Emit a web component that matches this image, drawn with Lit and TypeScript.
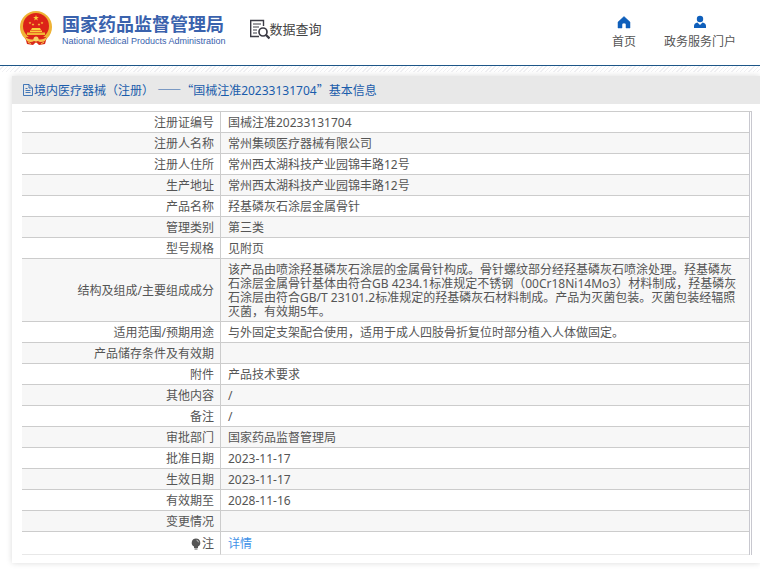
import { LitElement, html, css, svg } from "lit";
import { customElement } from "lit/decorators.js";
import { classMap } from "lit/directives/class-map.js";

const rows: [string, string][] = [
  ["注册证编号", "国械注准20233131704"],
  ["注册人名称", "常州集硕医疗器械有限公司"],
  ["注册人住所", "常州西太湖科技产业园锦丰路12号"],
  ["生产地址", "常州西太湖科技产业园锦丰路12号"],
  ["产品名称", "羟基磷灰石涂层金属骨针"],
  ["管理类别", "第三类"],
  ["型号规格", "见附页"],
  [
    "结构及组成/主要组成成分",
    "该产品由喷涂羟基磷灰石涂层的金属骨针构成。骨针螺纹部分经羟基磷灰石喷涂处理。羟基磷灰石涂层金属骨针基体由符合GB 4234.1标准规定不锈钢（00Cr18Ni14Mo3）材料制成，羟基磷灰石涂层由符合GB/T 23101.2标准规定的羟基磷灰石材料制成。产品为灭菌包装。灭菌包装经辐照灭菌，有效期5年。",
  ],
  ["适用范围/预期用途", "与外固定支架配合使用，适用于成人四肢骨折复位时部分植入人体做固定。"],
  ["产品储存条件及有效期", ""],
  ["附件", "产品技术要求"],
  ["其他内容", "/"],
  ["备注", "/"],
  ["审批部门", "国家药品监督管理局"],
  ["批准日期", "2023-11-17"],
  ["生效日期", "2023-11-17"],
  ["有效期至", "2028-11-16"],
  ["变更情况", ""],
];

const star = (x: number, y: number, r: number) => {
  const pts = Array.from({ length: 10 }, (_, i) => {
    const a = (Math.PI / 5) * i - Math.PI / 2;
    const d = i % 2 ? r * 0.4 : r;
    return `${x + d * Math.cos(a)},${y + d * Math.sin(a)}`;
  }).join(" ");
  return svg`<polygon points=${pts} fill="#fbd03c" />`;
};

@customElement("site-header")
export class SiteHeader extends LitElement {
  static styles = css`
    :host {
      display: block;
      background: #fff;
      border-bottom: 1px solid #1d5688;
    }
    .bar {
      display: flex;
      align-items: flex-start;
      height: 65px;
      box-sizing: border-box;
      padding: 10px 24px 0 19px;
    }
    a {
      color: inherit;
      text-decoration: none;
    }
    .brand {
      display: flex;
      gap: 8px;
      color: #3a62ad;
    }
    .names {
      display: flex;
      flex-direction: column;
      padding-top: 4px;
      white-space: nowrap;
    }
    .zh {
      font-size: 18px;
      line-height: 20px;
      font-weight: 700;
    }
    .en {
      font-family: "Liberation Sans", sans-serif;
      font-size: 9px;
      line-height: 14px;
    }
    .query {
      display: flex;
      align-items: center;
      margin: 8px 0 0 24px;
      font-size: 13px;
      line-height: 22px;
      color: #444;
      white-space: nowrap;
    }
    nav {
      display: flex;
      gap: 28px;
      margin-left: auto;
      padding-top: 5px;
    }
    .item {
      display: flex;
      flex-direction: column;
      align-items: center;
      gap: 4px;
      line-height: 18px;
      color: #555;
      white-space: nowrap;
    }
    svg {
      display: block;
      flex: none;
    }
  `;

  render() {
    return html`
      <div class="bar">
        <a class="brand" href="#">
          <svg width="35" height="36" viewBox="0 0 35 36" aria-hidden="true">
            <circle cx="17" cy="17" r="16" fill="#efb336" />
            <path d="M6 27 L8 34 L14 35 L17 32 L20 35 L26 34 L28 27 Z" fill="#d92a1c" />
            <circle cx="17" cy="16" r="13" fill="#dc2318" />
            ${star(17, 8, 3)} ${star(11, 13, 1.5)} ${star(14, 14.5, 1.5)}
            ${star(20, 14.5, 1.5)} ${star(23, 13, 1.5)}
            <path d="M12 20 L13 18 H21 L22 20 Z M11 20.5 H23 V22 H11 Z" fill="#fbd03c" />
            <path d="M8 22.5 H26 V25 H8 Z" fill="#f3b534" />
            <path d="M5 26 Q11 31 15 29 L17 27 L19 29 Q23 31 29 26 L26 31 Q21 33 19 31 H15 Q12 33 8 31 Z" fill="#f5c24a" />
            <circle cx="17" cy="29" r="2.5" fill="#f8d266" />
            <path d="M9 32 L12 34 M25 32 L22 34" stroke="#f5c24a" />
          </svg>
          <span class="names">
            <span class="zh">国家药品监督管理局</span>
            <span class="en">National Medical Products Administration</span>
          </span>
        </a>
        <a class="query" href="#">
          <svg width="20" height="22" viewBox="0 0 20 22" fill="none" stroke="#3c3c46" aria-hidden="true">
            <path d="M13.500 8 V2.500 H0.700 V18.500 H9" stroke-width="1.4" />
            <path d="M3 6 H11 M3 9 H9 M3 12 H7 M3 15 H7" stroke-width="1.2" />
            <circle cx="13" cy="14" r="4" stroke-width="1.7" />
            <path d="M16 17 L19.500 20.500" stroke-width="2.3" />
          </svg>
          <span>数据查询</span>
        </a>
        <nav>
          <a class="item" href="#">
            <svg width="14" height="14" viewBox="0 0 14 14" fill="#0f5fbb" aria-hidden="true">
              <path d="M7 1.500 L13 7 V13 H9 V9.500 Q9 8 7 8 Q5 8 5 9.500 V13 H1 V7 Z" stroke="#0f5fbb" stroke-width=".5" stroke-linejoin="round" />
            </svg>
            首页
          </a>
          <a class="item" href="#">
            <svg width="14" height="14" viewBox="0 0 14 14" fill="#0f5fbb" aria-hidden="true">
              <circle cx="7" cy="4" r="3.2" />
              <path d="M1 13 V11 Q1 8 4.500 7.500 L7 10 L9.500 7.500 Q13 8 13 11 V13 Z" />
            </svg>
            政务服务门户
          </a>
        </nav>
      </div>
    `;
  }
}

@customElement("record-card")
export class RecordCard extends LitElement {
  static styles = css`
    :host {
      display: block;
      background: #fff;
      box-shadow: 0 0 6px rgba(0, 0, 0, 0.15);
    }
    h1 {
      display: flex;
      align-items: center;
      margin: 0;
      padding: 0 10px;
      height: 28px;
      background: #e8e8e8;
      color: #1a5cab;
      font-size: 12px;
      font-weight: 400;
      white-space: pre;
    }
    .wide {
      font-family: "Noto Sans CJK SC", sans-serif;
      font-feature-settings: "fwid";
    }
    .body {
      padding: 7px 8px 8px 10px;
    }
    .frame {
      border-top: 1px solid #ccc;
      border-right: 1px solid #c8c8cf;
      padding-right: 1px;
    }
    table {
      width: 100%;
      table-layout: fixed;
      border-collapse: separate;
      border-spacing: 0;
      border-right: 1px solid #c8c8cf;
    }
    th,
    td {
      height: 14px;
      line-height: 14px;
      border-bottom: 1px solid #ccc;
      font-weight: 400;
      vertical-align: middle;
    }
    th {
      width: 186px;
      padding: 4px 6px 2px;
      text-align: right;
      border-right: 1px solid #ccc;
    }
    td {
      padding: 4px 7px 2px;
      text-align: left;
    }
    .even {
      background: #f7f7f7;
    }
    .note th,
    .note td {
      height: 16px;
      border-bottom-color: #e8e8e8;
    }
    .note a {
      color: #3f92e8;
      text-decoration: none;
    }
    .tag {
      display: flex;
      align-items: center;
      justify-content: flex-end;
      gap: 1px;
    }
  `;

  render() {
    return html`
      <h1 lang="zh-CN"><svg width="12" height="12" viewBox="0 0 12 12" fill="none" stroke="#1a5cab" aria-hidden="true"><path d="M1.500 .500 H7 L10.500 4 V11.500 H1.500 Z M7 .500 V4 H10.500 M3.500 6.500 H8.500 M3.500 8.500 H8.500 M3.500 4.500 H5.500" stroke-width=".8" /></svg><span>境内医疗器械（注册） <span class="wide">——“</span>国械注准20233131704<span class="wide">”</span>基本信息</span></h1>
      <div class="body">
        <div class="frame">
          <table lang="zh-CN">
            <tbody>
              ${rows.map(
                ([label, value], i) => html`
                  <tr class=${classMap({ even: i % 2 === 1 })}>
                    <th scope="row">${label}</th>
                    <td>${value}</td>
                  </tr>
                `
              )}
              <tr class="note">
                <th scope="row">
                  <span class="tag">
                    <svg width="10" height="12" viewBox="0 0 10 12" aria-hidden="true">
                      <path d="M5 .5 A4.300 4.300 0 0 1 7 8.600 V10 H3 V8.600 A4.300 4.300 0 0 1 5 .5 Z M3.500 10.500 H6.500 V11.500 H3.500 Z" fill="#555" />
                      <path d="M5.500 2.200 Q7.300 2.500 7.500 4.300" fill="none" stroke="#ddd" stroke-width=".8" />
                    </svg>
                    注
                  </span>
                </th>
                <td><a href="#">详情</a></td>
              </tr>
            </tbody>
          </table>
        </div>
      </div>
    `;
  }
}

@customElement("app-root")
export class AppRoot extends LitElement {
  static styles = css`
    :host {
      display: block;
      overflow: hidden;
      font-family: "Noto Sans", "Noto Sans CJK SC", sans-serif;
      font-size: 12px;
      color: #555;
      background: #fff;
    }
    .hatch {
      height: 6px;
      background: repeating-linear-gradient(135deg, #fff 0 2px, #f0f0f3 2px 3px);
    }
    main {
      padding: 4px 0 7px 12px;
    }
  `;

  render() {
    return html`
      <site-header></site-header>
      <div class="hatch"></div>
      <main><record-card></record-card></main>
    `;
  }
}
